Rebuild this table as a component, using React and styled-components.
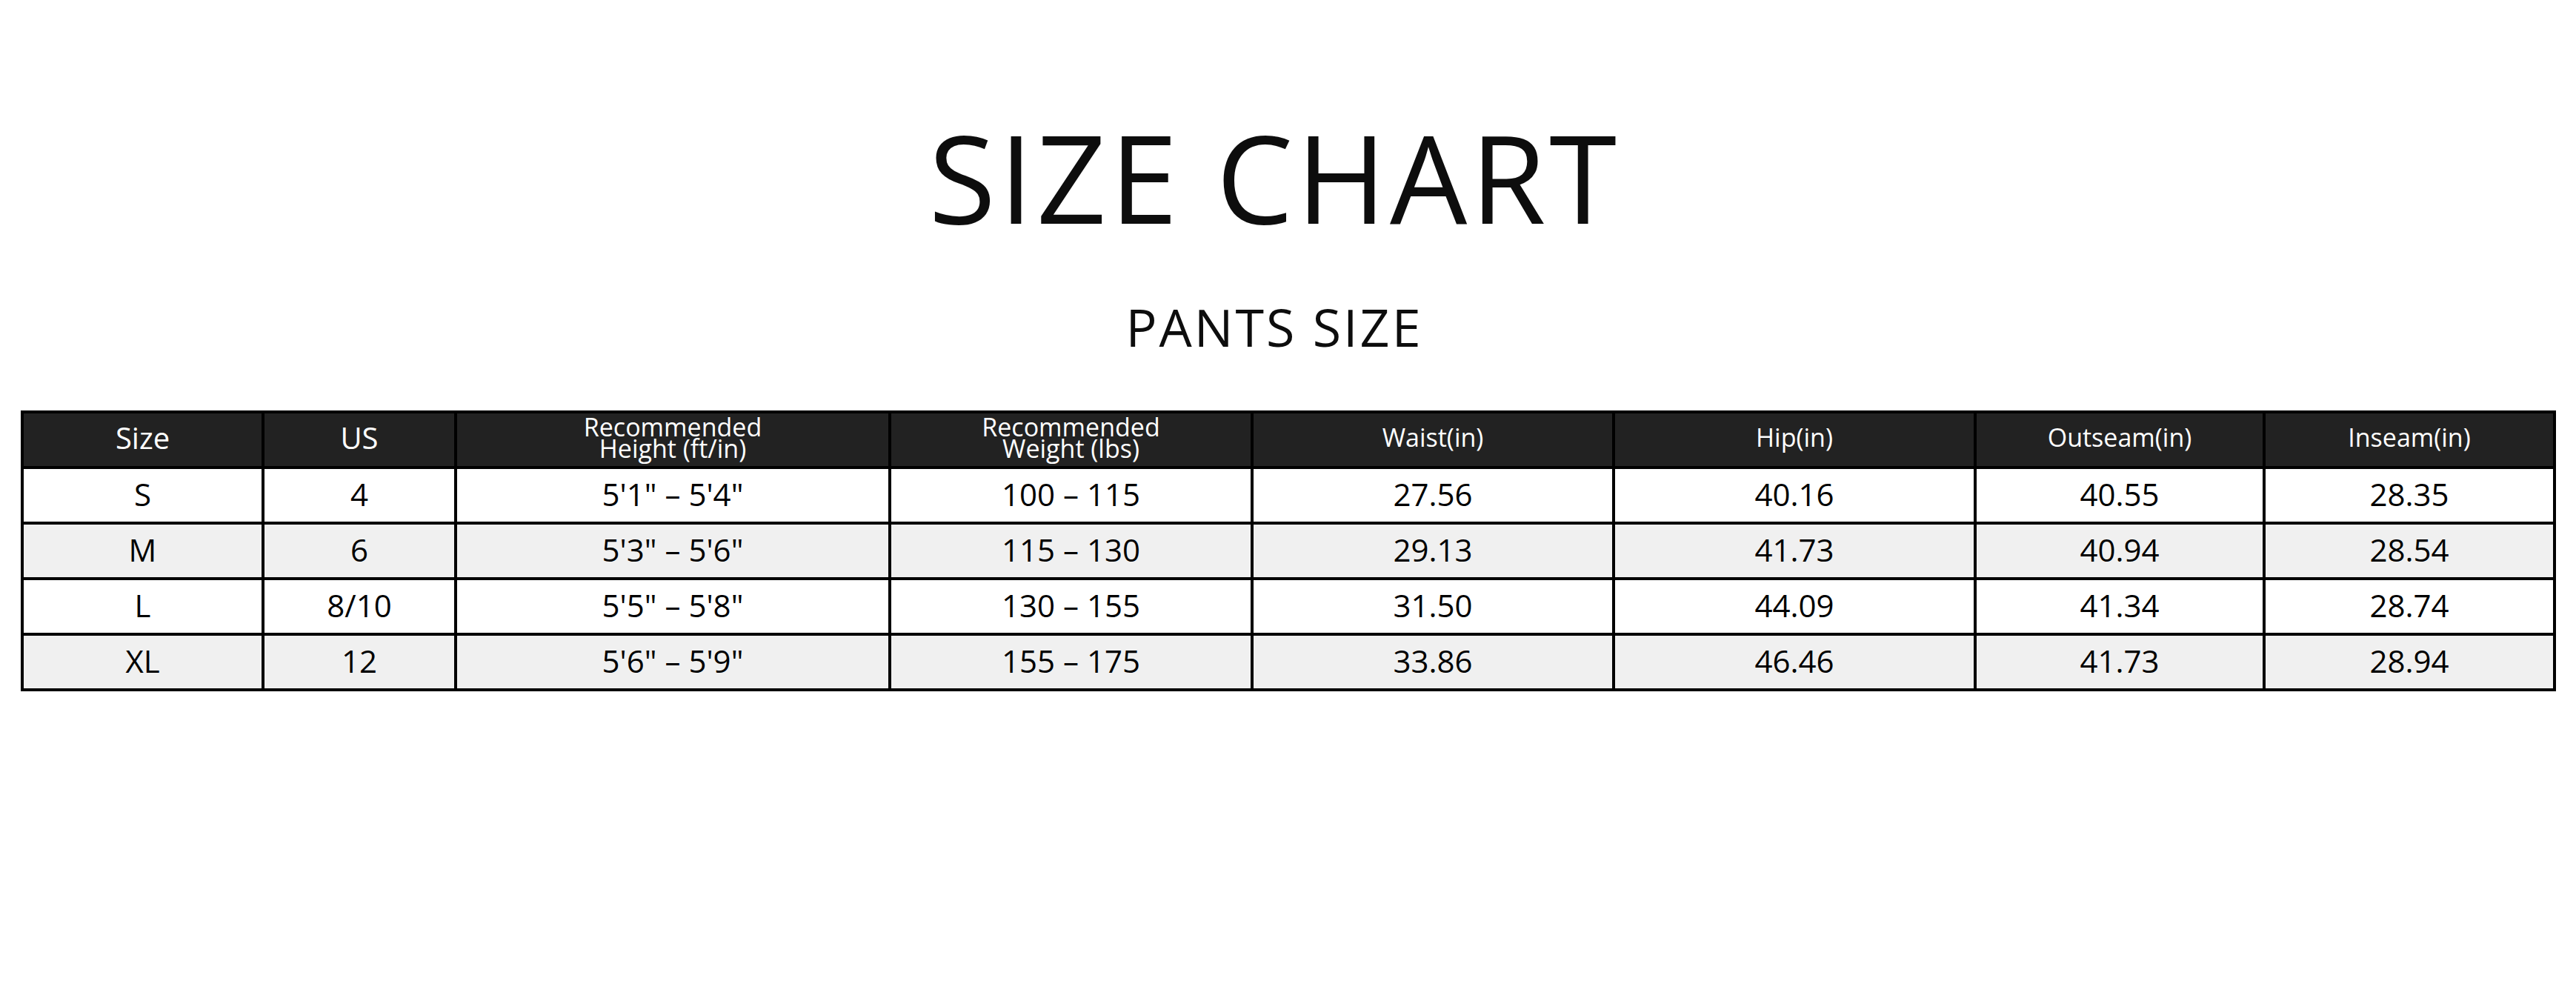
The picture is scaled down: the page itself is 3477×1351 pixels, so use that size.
import React from "react";
import styled, { createGlobalStyle } from "styled-components";

const GlobalStyle = createGlobalStyle`
  html, body {
    margin: 0;
    padding: 0;
    background: #ffffff;
  }
  body {
    font-family: "Open Sans", "Noto Sans", "Liberation Sans", sans-serif;
    color: #000;
  }
`;

const Page = styled.main`
  width: 3477px;
  min-height: 1351px;
  box-sizing: border-box;
  padding: 156px 27px 0 28px;
  display: flex;
  flex-direction: column;
`;

const Headings = styled.header`
  display: flex;
  flex-direction: column;
  align-items: center;
  padding-right: 38px;
`;

const Title = styled.h1`
  margin: 0;
  font-size: 165px;
  line-height: 1;
  font-weight: 400;
  letter-spacing: 4.5px;
  color: #0d0d0d;
`;

const Subtitle = styled.h2`
  margin: 85px 0 0;
  font-size: 70px;
  line-height: 1;
  font-weight: 400;
  letter-spacing: 3px;
  color: #0d0d0d;
`;

const Grid = styled.div`
  margin-top: 78px;
  display: grid;
  grid-template-columns: 321px 256px 582px 485px 484px 484px 386px 388px;
  grid-auto-rows: 71px;
  gap: 4px;
  padding: 4px;
  background: #000;
  width: max-content;
`;

const HeadCell = styled.div`
  background: #222222;
  color: #ffffff;
  display: flex;
  align-items: center;
  justify-content: center;
  text-align: center;
  box-sizing: border-box;
  padding-bottom: 6px;
  font-size: ${(p) => (p.$big ? "40px" : "34px")};
  line-height: 29px;
  font-weight: 400;
  white-space: pre-line;
`;

const Cell = styled.div`
  background: ${(p) => (p.$alt ? "#f0f0f0" : "#ffffff")};
  color: #000;
  display: flex;
  align-items: center;
  justify-content: center;
  padding-bottom: 3px;
  font-size: 42px;
  font-weight: 500;
  line-height: 1;
`;

const headers = [
  { t: "Size", big: true },
  { t: "US", big: true },
  { t: "Recommended\nHeight (ft/in)" },
  { t: "Recommended\nWeight (lbs)" },
  { t: "Waist(in)" },
  { t: "Hip(in)" },
  { t: "Outseam(in)" },
  { t: "Inseam(in)" },
];

const rows = [
  ["S", "4", "5'1\" – 5'4\"", "100 – 115", "27.56", "40.16", "40.55", "28.35"],
  ["M", "6", "5'3\" – 5'6\"", "115 – 130", "29.13", "41.73", "40.94", "28.54"],
  ["L", "8/10", "5'5\" – 5'8\"", "130 – 155", "31.50", "44.09", "41.34", "28.74"],
  ["XL", "12", "5'6\" – 5'9\"", "155 – 175", "33.86", "46.46", "41.73", "28.94"],
];

export default function App() {
  return (
    <>
      <GlobalStyle />
      <Page>
        <Headings>
          <Title>SIZE CHART</Title>
          <Subtitle>PANTS SIZE</Subtitle>
        </Headings>
        <Grid role="table">
          {headers.map((h) => (
            <HeadCell key={h.t} $big={h.big} role="columnheader">
              {h.t}
            </HeadCell>
          ))}
          {rows.map((r, i) =>
            r.map((v, j) => (
              <Cell key={`${i}-${j}`} $alt={i % 2 === 1} role="cell">
                {v}
              </Cell>
            ))
          )}
        </Grid>
      </Page>
    </>
  );
}
